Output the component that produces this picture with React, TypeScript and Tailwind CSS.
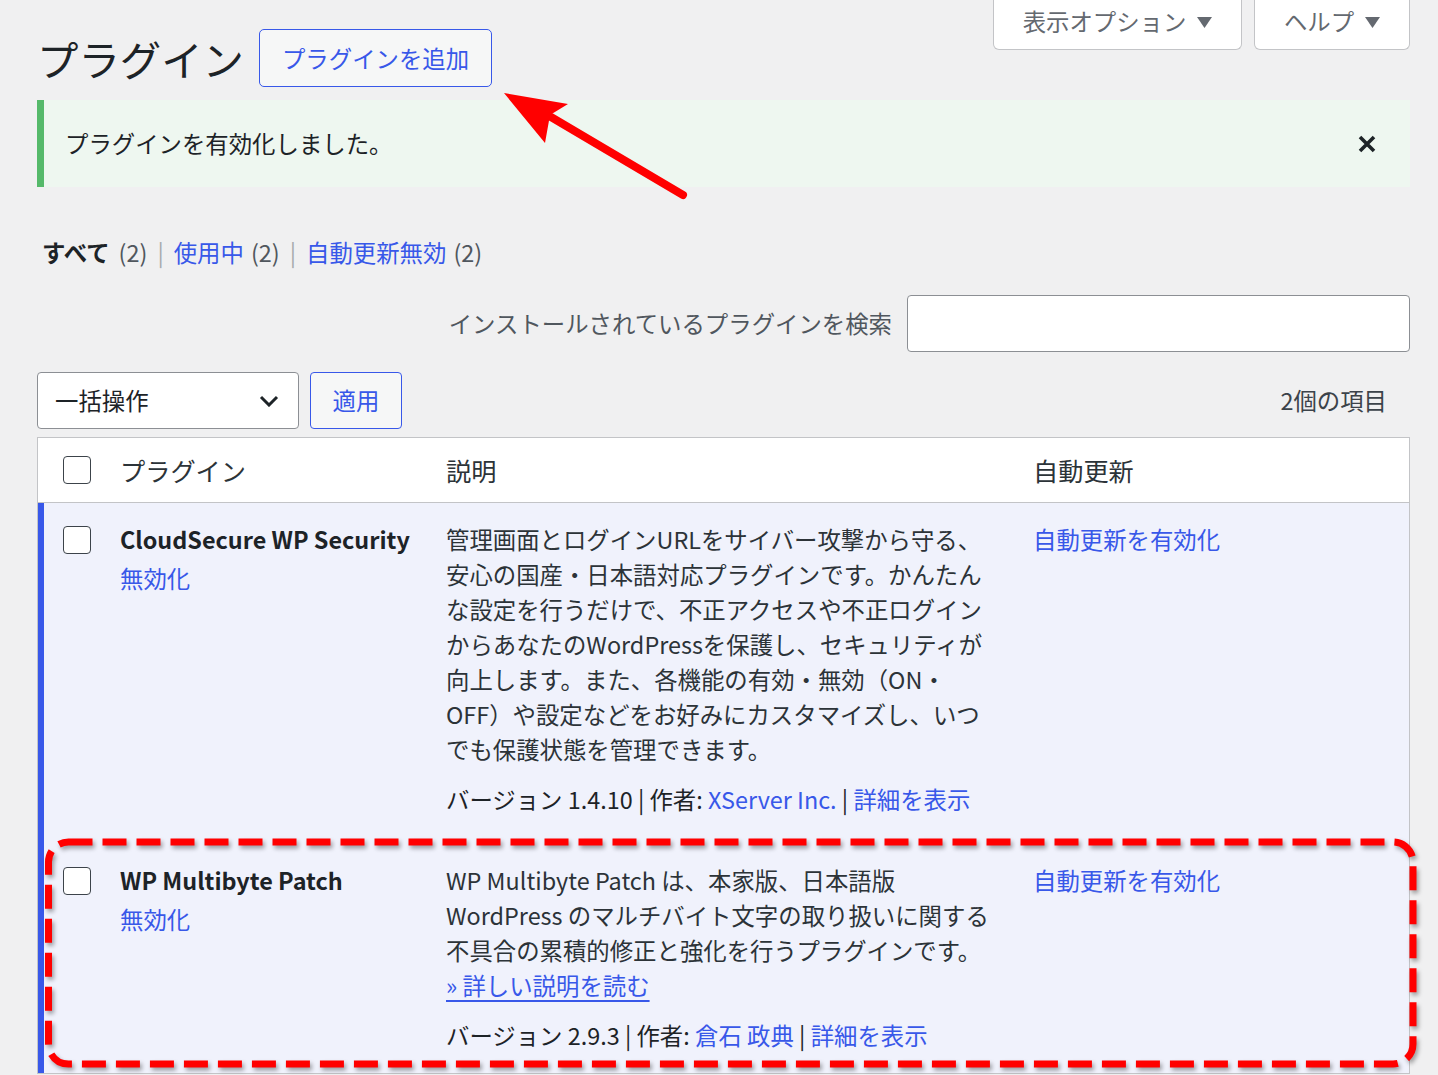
import React from "react";

const FONT = "font-['Noto_Sans_CJK_JP','Noto_Sans',sans-serif]";

function Checkbox() {
  return (
    <span className="block h-[28px] w-[28px] rounded-[4px] border border-[#3c434a] bg-white" />
  );
}

function Triangle() {
  return (
    <svg width="15" height="12" viewBox="0 0 15 12" className="shrink-0">
      <path d="M0 1 L15 1 L7.5 12 Z" fill="#646970" />
    </svg>
  );
}

const row1 = [
  "管理画面とログインURLをサイバー攻撃から守る、",
  "安心の国産・日本語対応プラグインです。かんたん",
  "な設定を行うだけで、不正アクセスや不正ログイン",
  "からあなたのWordPressを保護し、セキュリティが",
  "向上します。また、各機能の有効・無効（ON・",
  "OFF）や設定などをお好みにカスタマイズし、いつ",
  "でも保護状態を管理できます。",
];

const row2 = [
  "WP Multibyte Patch は、本家版、日本語版",
  "WordPress のマルチバイト文字の取り扱いに関する",
  "不具合の累積的修正と強化を行うプラグインです。",
];

function PluginRow({
  name,
  lines,
  more,
  version,
  author,
  pt,
  pb,
}: {
  name: string;
  lines: string[];
  more?: string;
  version: string;
  author: string;
  pt: string;
  pb: string;
}) {
  return (
    <div className={`flex items-start bg-[#f0f2fc] shadow-[inset_6px_0_0_#3858e9] ${pt} ${pb}`}>
      <div className="w-[82px] shrink-0 pl-[25px] pt-[3.5px]">
        <Checkbox />
      </div>
      <div className="w-[308px] shrink-0">
        <p className="whitespace-nowrap text-[23.4px] font-bold leading-[35px] text-[#1d2327]">{name}</p>
        <p className="mt-[4px] text-[#3858e9]">無効化</p>
      </div>
      <div className="w-[587px] shrink-0 px-[18px] text-[#2c3338]">
        <div>
          {lines.map((l) => (
            <span key={l} className="block whitespace-nowrap">
              {l}
            </span>
          ))}
          {more && (
            <span className="block whitespace-nowrap text-[#3858e9] underline underline-offset-[5px]">
              {more}
            </span>
          )}
        </div>
        <p className="mt-[15px] whitespace-nowrap text-[#1d2327]">
          バージョン {version} | 作者: <span className="text-[#3858e9]">{author}</span> |{" "}
          <span className="text-[#3858e9]">詳細を表示</span>
        </p>
      </div>
      <div className="flex-1 px-[18px] text-[#3858e9]">自動更新を有効化</div>
    </div>
  );
}

export default function App() {
  return (
    <div
      className={`relative min-h-screen overflow-hidden bg-[#f0f0f1] ${FONT} text-[23.4px] leading-[35px] text-[#3c434a]`}
    >
      <div className="pl-[37px] pr-[28px]">
        {/* Title + screen meta */}
        <div className="flex items-start justify-between">
          <div className="flex items-center gap-[15px] pt-[29px]">
            <h1 className="text-[41.4px] font-normal leading-[54px] text-[#1d2327]">プラグイン</h1>
            <button className="h-[58px] rounded-[5px] border border-[#3858e9] bg-[#f6f7f7] px-[22px] text-[#3858e9]">
              プラグインを追加
            </button>
          </div>
          <div className="flex gap-[12px]">
            <button className="flex h-[50px] w-[249px] items-center justify-center gap-[11px] rounded-b-[6px] border border-t-0 border-[#c3c4c7] bg-white pb-[6px] text-[#646970]">
              表示オプション <Triangle />
            </button>
            <button className="flex h-[50px] w-[156px] items-center justify-center gap-[11px] rounded-b-[6px] border border-t-0 border-[#c3c4c7] bg-white pb-[6px] text-[#646970]">
              ヘルプ <Triangle />
            </button>
          </div>
        </div>

        {/* Notice */}
        <div className="mt-[13px] flex h-[87px] items-center justify-between border-l-[7px] border-[#55b96a] bg-[#eef7f0] pl-[21px] pr-[33px] text-[#1d2327]">
          <p>プラグインを有効化しました。</p>
          <svg width="20" height="20" viewBox="0 0 20 20">
            <path d="M3 3 L17 17 M17 3 L3 17" stroke="#1d2327" strokeWidth="3.6" />
          </svg>
        </div>

        {/* Filters */}
        <div className="mt-[48px] flex items-center pl-[5px]">
          <span className="font-bold text-[#1d2327]">すべて</span>
          <span className="ml-[9px] text-[#50575e]">(2)</span>
          <span className="mx-[10px] text-[#a7aaad]">|</span>
          <span className="text-[#3858e9]">使用中</span>
          <span className="ml-[7px] text-[#50575e]">(2)</span>
          <span className="mx-[10px] text-[#a7aaad]">|</span>
          <span className="text-[#3858e9]">自動更新無効</span>
          <span className="ml-[7px] text-[#50575e]">(2)</span>
        </div>

        {/* Search */}
        <div className="mt-[25px] flex items-center justify-end gap-[15px]">
          <span className="text-[#50575e]">インストールされているプラグインを検索</span>
          <div className="h-[57px] w-[503px] rounded-[4px] border border-[#8c8f94] bg-white" />
        </div>

        {/* Bulk actions */}
        <div className="mt-[20px] flex items-center">
          <div className="flex h-[57px] w-[262px] items-center justify-between rounded-[4px] border border-[#8c8f94] bg-white pl-[17px] pr-[19px] text-[#1d2327]">
            <span>一括操作</span>
            <svg width="20" height="12" viewBox="0 0 20 12">
              <path d="M2 2 L10 10 L18 2" stroke="#1d2327" strokeWidth="3" fill="none" />
            </svg>
          </div>
          <button className="ml-[11px] h-[57px] w-[92px] rounded-[4px] border border-[#3858e9] bg-[#f6f7f7] text-[#3858e9]">
            適用
          </button>
          <span className="ml-auto pr-[23px] text-[#3c434a]">2個の項目</span>
        </div>

        {/* Table */}
        <div className="mt-[8px] border border-[#c3c4c7] bg-white">
          <div className="flex h-[65px] items-center border-b border-[#c3c4c7] text-[25.2px] text-[#2c3338]">
            <div className="w-[82px] shrink-0 pl-[25px]">
              <Checkbox />
            </div>
            <div className="w-[308px] shrink-0">プラグイン</div>
            <div className="w-[587px] shrink-0 px-[18px]">説明</div>
            <div className="flex-1 px-[18px]">自動更新</div>
          </div>
          <PluginRow
            name="CloudSecure WP Security"
            lines={row1}
            version="1.4.10"
            author="XServer Inc."
            pt="pt-[19px]"
            pb="pb-[21px]"
          />
          <PluginRow
            name="WP Multibyte Patch"
            lines={row2}
            more="» 詳しい説明を読む"
            version="2.9.3"
            author="倉石 政典"
            pt="pt-[25px]"
            pb="pb-[20px]"
          />
        </div>
      </div>

      {/* Annotation: red dashed box */}
      <svg
        className="pointer-events-none absolute left-[40px] top-[834px]"
        width="1382"
        height="240"
        viewBox="0 0 1382 240"
        style={{ filter: "drop-shadow(2px 3px 2px rgba(0,0,0,0.35))" }}
      >
        <rect
          x="8.5"
          y="8"
          width="1364.5"
          height="222"
          rx="20"
          fill="none"
          stroke="#ff0000"
          strokeWidth="7"
          strokeDasharray="24 10"
        />
      </svg>

      {/* Annotation: arrow */}
      <svg
        className="pointer-events-none absolute left-[495px] top-[85px]"
        width="200"
        height="120"
        viewBox="0 0 200 120"
      >
        <line x1="56" y1="32" x2="188" y2="110" stroke="#ff0000" strokeWidth="8" strokeLinecap="round" />
        <path d="M9 8 L73 19 L55 30 L50 58 Z" fill="#ff0000" />
      </svg>
    </div>
  );
}
